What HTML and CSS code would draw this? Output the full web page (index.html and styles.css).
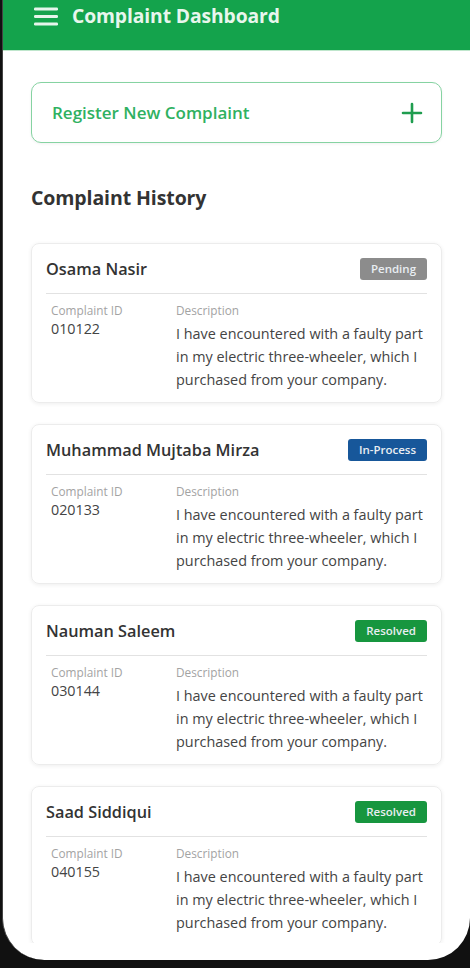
FILE: index.html
```html
<!DOCTYPE html>
<html>
<head>
<meta charset="utf-8">
<link rel="stylesheet" href="styles.css">
</head>
<body>
<div class="screen">
  <header class="topbar">
    <svg class="menu" width="24" height="19" viewBox="0 0 24 19"><rect x="0" y="0.5" width="24" height="3" rx="1.2" fill="#e6f5eb"/><rect x="0" y="8" width="24" height="3" rx="1.2" fill="#e6f5eb"/><rect x="0" y="15.5" width="24" height="3" rx="1.2" fill="#e6f5eb"/></svg>
    <h1 class="title">Complaint Dashboard</h1>
  </header>
  <main class="content">
    <button class="register">
      <span>Register New Complaint</span>
      <svg width="22" height="22" viewBox="0 0 22 22"><path d="M11 2v18M2 11h18" stroke="#1f9d4f" stroke-width="2.6" stroke-linecap="round"/></svg>
    </button>
    <h2 class="section">Complaint History</h2>
    <div class="list">
      <div class="card">
        <div class="card-head"><span class="name">Osama Nasir</span><span class="badge pending">Pending</span></div>
        <div class="card-body">
          <div class="col-id"><div class="label">Complaint ID</div><div class="value">010122</div></div>
          <div class="col-desc"><div class="label">Description</div><div class="desc">I have encountered with a faulty part in my electric three-wheeler, which I purchased from your company.</div></div>
        </div>
      </div>
      <div class="card">
        <div class="card-head"><span class="name">Muhammad Mujtaba Mirza</span><span class="badge process">In-Process</span></div>
        <div class="card-body">
          <div class="col-id"><div class="label">Complaint ID</div><div class="value">020133</div></div>
          <div class="col-desc"><div class="label">Description</div><div class="desc">I have encountered with a faulty part in my electric three-wheeler, which I purchased from your company.</div></div>
        </div>
      </div>
      <div class="card">
        <div class="card-head"><span class="name">Nauman Saleem</span><span class="badge resolved">Resolved</span></div>
        <div class="card-body">
          <div class="col-id"><div class="label">Complaint ID</div><div class="value">030144</div></div>
          <div class="col-desc"><div class="label">Description</div><div class="desc">I have encountered with a faulty part in my electric three-wheeler, which I purchased from your company.</div></div>
        </div>
      </div>
      <div class="card">
        <div class="card-head"><span class="name">Saad Siddiqui</span><span class="badge resolved">Resolved</span></div>
        <div class="card-body">
          <div class="col-id"><div class="label">Complaint ID</div><div class="value">040155</div></div>
          <div class="col-desc"><div class="label">Description</div><div class="desc">I have encountered with a faulty part in my electric three-wheeler, which I purchased from your company.</div></div>
        </div>
      </div>
    </div>
  </main>
</div>
</body>
</html>
```
FILE: styles.css
```css
* { box-sizing: border-box; }
html, body { margin: 0; padding: 0; }
body {
  background: #111;
  width: 470px;
  height: 968px;
  overflow: hidden;
  font-family: "Open Sans", "Noto Sans", sans-serif;
}
.screen {
  margin-left: 2px;
  width: 468px;
  height: 960px;
  background: #fff;
  border-bottom-left-radius: 42px;
  border-bottom-right-radius: 42px;
  overflow: hidden;
  display: flex;
  flex-direction: column;
  border-left: 1px solid #444;
}
.topbar {
  height: 51px;
  background: #14a34c;
  border-bottom: 1px solid #bfe6cc;
  display: flex;
  align-items: flex-start;
  padding: 7px 0 0 31px;
  gap: 14px;
  flex-shrink: 0;
}
.menu { display: block; }
.title {
  margin: -6px 0 0;
  font-size: 19.3px;
  font-weight: 700;
  color: #e8f6ed;
  line-height: 30px;
  letter-spacing: -0.1px;
}
.content {
  height: 892px;
  overflow: hidden;
  padding: 31px 28px 0 28px;
  flex-shrink: 0;
}
.register {
  width: 411px;
  height: 61px;
  display: flex;
  align-items: center;
  justify-content: space-between;
  padding: 0 18px 0 20px;
  background: #fff;
  border: 1.5px solid #86d3a2;
  border-radius: 10px;
  font-family: inherit;
  font-size: 17px;
  font-weight: 600;
  color: #2fb161;
  box-shadow: 0 1px 3px rgba(0,0,0,0.06);
}
.section {
  margin: 41px 0 0 0;
  font-size: 19.5px;
  font-weight: 700;
  color: #333;
  line-height: 28px;
  letter-spacing: -0.1px;
}
.list {
  margin-top: 31px;
  display: flex;
  flex-direction: column;
  gap: 21px;
}
.card {
  width: 411px;
  height: 160px;
  flex-shrink: 0;
  border: 1px solid #ececec;
  border-radius: 8px;
  box-shadow: 0 1px 4px rgba(0,0,0,0.07);
  padding: 14px 14px 0 14px;
}
.card-head {
  display: flex;
  justify-content: space-between;
  align-items: center;
  height: 22px;
}
.name {
  font-size: 16.3px;
  font-weight: 600;
  color: #333;
}
.badge {
  height: 22px;
  line-height: 22px;
  padding: 0 11px;
  border-radius: 3px;
  font-size: 11.5px;
  font-weight: 600;
  color: #e9eef2;
}
.pending { background: #8c8c8c; }
.process { background: #17579a; }
.resolved { background: #17963f; }
.card-body {
  margin-top: 13px;
  border-top: 1.5px solid #e2e2e2;
  padding: 8px 0 0 5px;
  display: flex;
}
.col-id { width: 125px; flex-shrink: 0; }
.col-desc { flex: 0 0 255px; }
.label {
  font-size: 11.8px;
  color: #a3a3a3;
  line-height: 16px;
}
.value {
  font-size: 14.3px;
  color: #444;
  line-height: 22px;
}
.desc {
  font-size: 14.4px;
  color: #444;
  line-height: 23px;
  margin-top: 4px;
}
```
